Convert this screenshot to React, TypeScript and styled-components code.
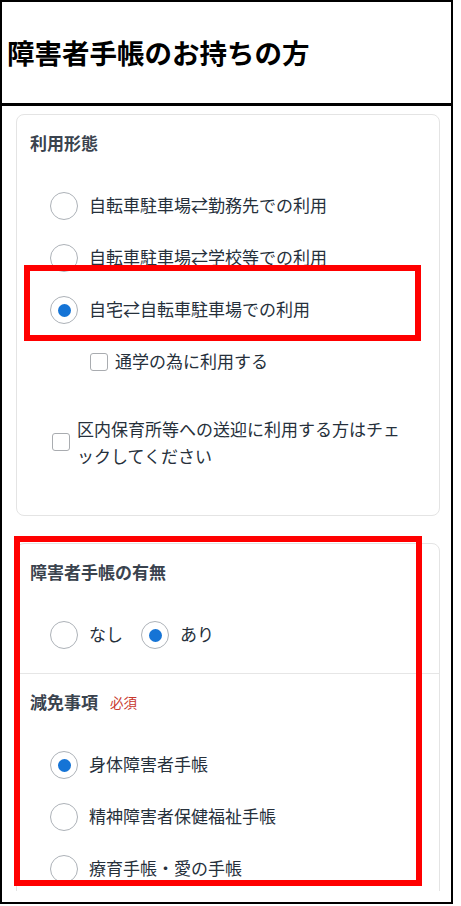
import styled, { createGlobalStyle } from "styled-components";

const GlobalStyle = createGlobalStyle`
  body {
    margin: 0;
    background: #fff;
    font-family: "Noto Sans CJK JP", "Noto Sans", sans-serif;
  }
`;

const Frame = styled.div`
  position: relative;
  width: 453px;
  height: 904px;
  box-sizing: border-box;
  border: 2px solid #000;
  background: #fff;
  display: flex;
  flex-direction: column;
`;

const Header = styled.header`
  height: 101px;
  flex: none;
  display: flex;
  align-items: center;
  padding-left: 5px;
  border-bottom: 3px solid #000;
`;

const Title = styled.h1`
  margin: 0;
  font-size: 27.5px;
  font-weight: 700;
  line-height: 1;
  color: #000;
`;

const Viewport = styled.main`
  height: 785px;
  flex: none;
  overflow: hidden;
  box-sizing: border-box;
  padding: 8px 11px 0 14px;
  display: flex;
  flex-direction: column;
  gap: 27px;
`;

const Card = styled.section`
  flex: none;
  border: 1px solid #e4e4e4;
  border-radius: 8px;
  background: #fff;
`;

const Section = styled.div<{ $pb: number; $divider?: boolean }>`
  padding: 16px 13px ${({ $pb }) => $pb}px 13px;
  border-top: ${({ $divider }) => ($divider ? "1px solid #e6e6e6" : "none")};
`;

const SectionTitle = styled.h2`
  margin: 0;
  display: flex;
  align-items: center;
  gap: 12px;
  font-size: 17px;
  font-weight: 700;
  line-height: 24px;
  color: #3a434e;
`;

const Required = styled.span`
  font-size: 13.5px;
  font-weight: 400;
  color: #c8372d;
`;

const Options = styled.div<{ $inline?: boolean }>`
  margin-top: 25px;
  padding-left: 20px;
  display: flex;
  flex-direction: ${({ $inline }) => ($inline ? "row" : "column")};
  gap: ${({ $inline }) => ($inline ? "18px" : "0")};
`;

const OptionRow = styled.label`
  height: 52px;
  display: flex;
  align-items: center;
  gap: 11px;
`;

const Radio = styled.span<{ $checked?: boolean }>`
  width: 28px;
  height: 28px;
  flex: none;
  box-sizing: border-box;
  border: 1.5px solid #adb2b8;
  border-radius: 50%;
  background: #fff;
  display: flex;
  align-items: center;
  justify-content: center;

  &::after {
    content: "";
    display: ${({ $checked }) => ($checked ? "block" : "none")};
    width: 13px;
    height: 13px;
    border-radius: 50%;
    background: #1574d6;
  }
`;

const OptionText = styled.span`
  font-size: 17px;
  line-height: 1;
  padding-bottom: 3px;
  color: #26303b;
`;

const CheckRow = styled.label<{ $indent: number }>`
  display: flex;
  align-items: center;
  gap: 7px;
  padding-left: ${({ $indent }) => $indent}px;
`;

const SubCheckRow = styled(CheckRow)`
  height: 52px;
`;

const NoteCheckRow = styled(CheckRow)`
  margin-top: 27px;
`;

const Checkbox = styled.span`
  width: 18px;
  height: 18px;
  flex: none;
  box-sizing: border-box;
  border: 1.5px solid #a9acb0;
  border-radius: 3px;
  background: #fff;
`;

const CheckText = styled.span`
  max-width: 330px;
  font-size: 17px;
  line-height: 27px;
  color: #26303b;
  line-break: anywhere;
`;

const Highlight = styled.div<{ $x: number; $y: number; $w: number; $h: number }>`
  position: absolute;
  left: ${({ $x }) => $x}px;
  top: ${({ $y }) => $y}px;
  width: ${({ $w }) => $w}px;
  height: ${({ $h }) => $h}px;
  box-sizing: border-box;
  border: 6px solid #ff0000;
  pointer-events: none;
`;

const usageOptions = [
  { label: "自転車駐車場⇄勤務先での利用", checked: false },
  { label: "自転車駐車場⇄学校等での利用", checked: false },
  { label: "自宅⇄自転車駐車場での利用", checked: true },
];

const exemptionOptions = [
  { label: "身体障害者手帳", checked: true },
  { label: "精神障害者保健福祉手帳", checked: false },
  { label: "療育手帳・愛の手帳", checked: false },
];

export default function App() {
  return (
    <>
      <GlobalStyle />
      <Frame>
        <Header>
          <Title>障害者手帳のお持ちの方</Title>
        </Header>
        <Viewport>
          <Card>
            <Section $pb={46}>
              <SectionTitle>利用形態</SectionTitle>
              <Options>
                {usageOptions.map((o) => (
                  <OptionRow key={o.label}>
                    <Radio $checked={o.checked} />
                    <OptionText>{o.label}</OptionText>
                  </OptionRow>
                ))}
                <SubCheckRow $indent={40}>
                  <Checkbox />
                  <OptionText>通学の為に利用する</OptionText>
                </SubCheckRow>
              </Options>
              <NoteCheckRow $indent={22}>
                <Checkbox />
                <CheckText>区内保育所等への送迎に利用する方はチェックしてください</CheckText>
              </NoteCheckRow>
            </Section>
          </Card>
          <Card>
            <Section $pb={12}>
              <SectionTitle>障害者手帳の有無</SectionTitle>
              <Options $inline>
                <OptionRow>
                  <Radio />
                  <OptionText>なし</OptionText>
                </OptionRow>
                <OptionRow>
                  <Radio $checked />
                  <OptionText>あり</OptionText>
                </OptionRow>
              </Options>
            </Section>
            <Section $pb={24} $divider>
              <SectionTitle>
                減免事項<Required>必須</Required>
              </SectionTitle>
              <Options>
                {exemptionOptions.map((o) => (
                  <OptionRow key={o.label}>
                    <Radio $checked={o.checked} />
                    <OptionText>{o.label}</OptionText>
                  </OptionRow>
                ))}
              </Options>
            </Section>
          </Card>
        </Viewport>
        <Highlight $x={22} $y={263} $w={397} $h={76} />
        <Highlight $x={12} $y={534} $w={408} $h={350} />
      </Frame>
    </>
  );
}
